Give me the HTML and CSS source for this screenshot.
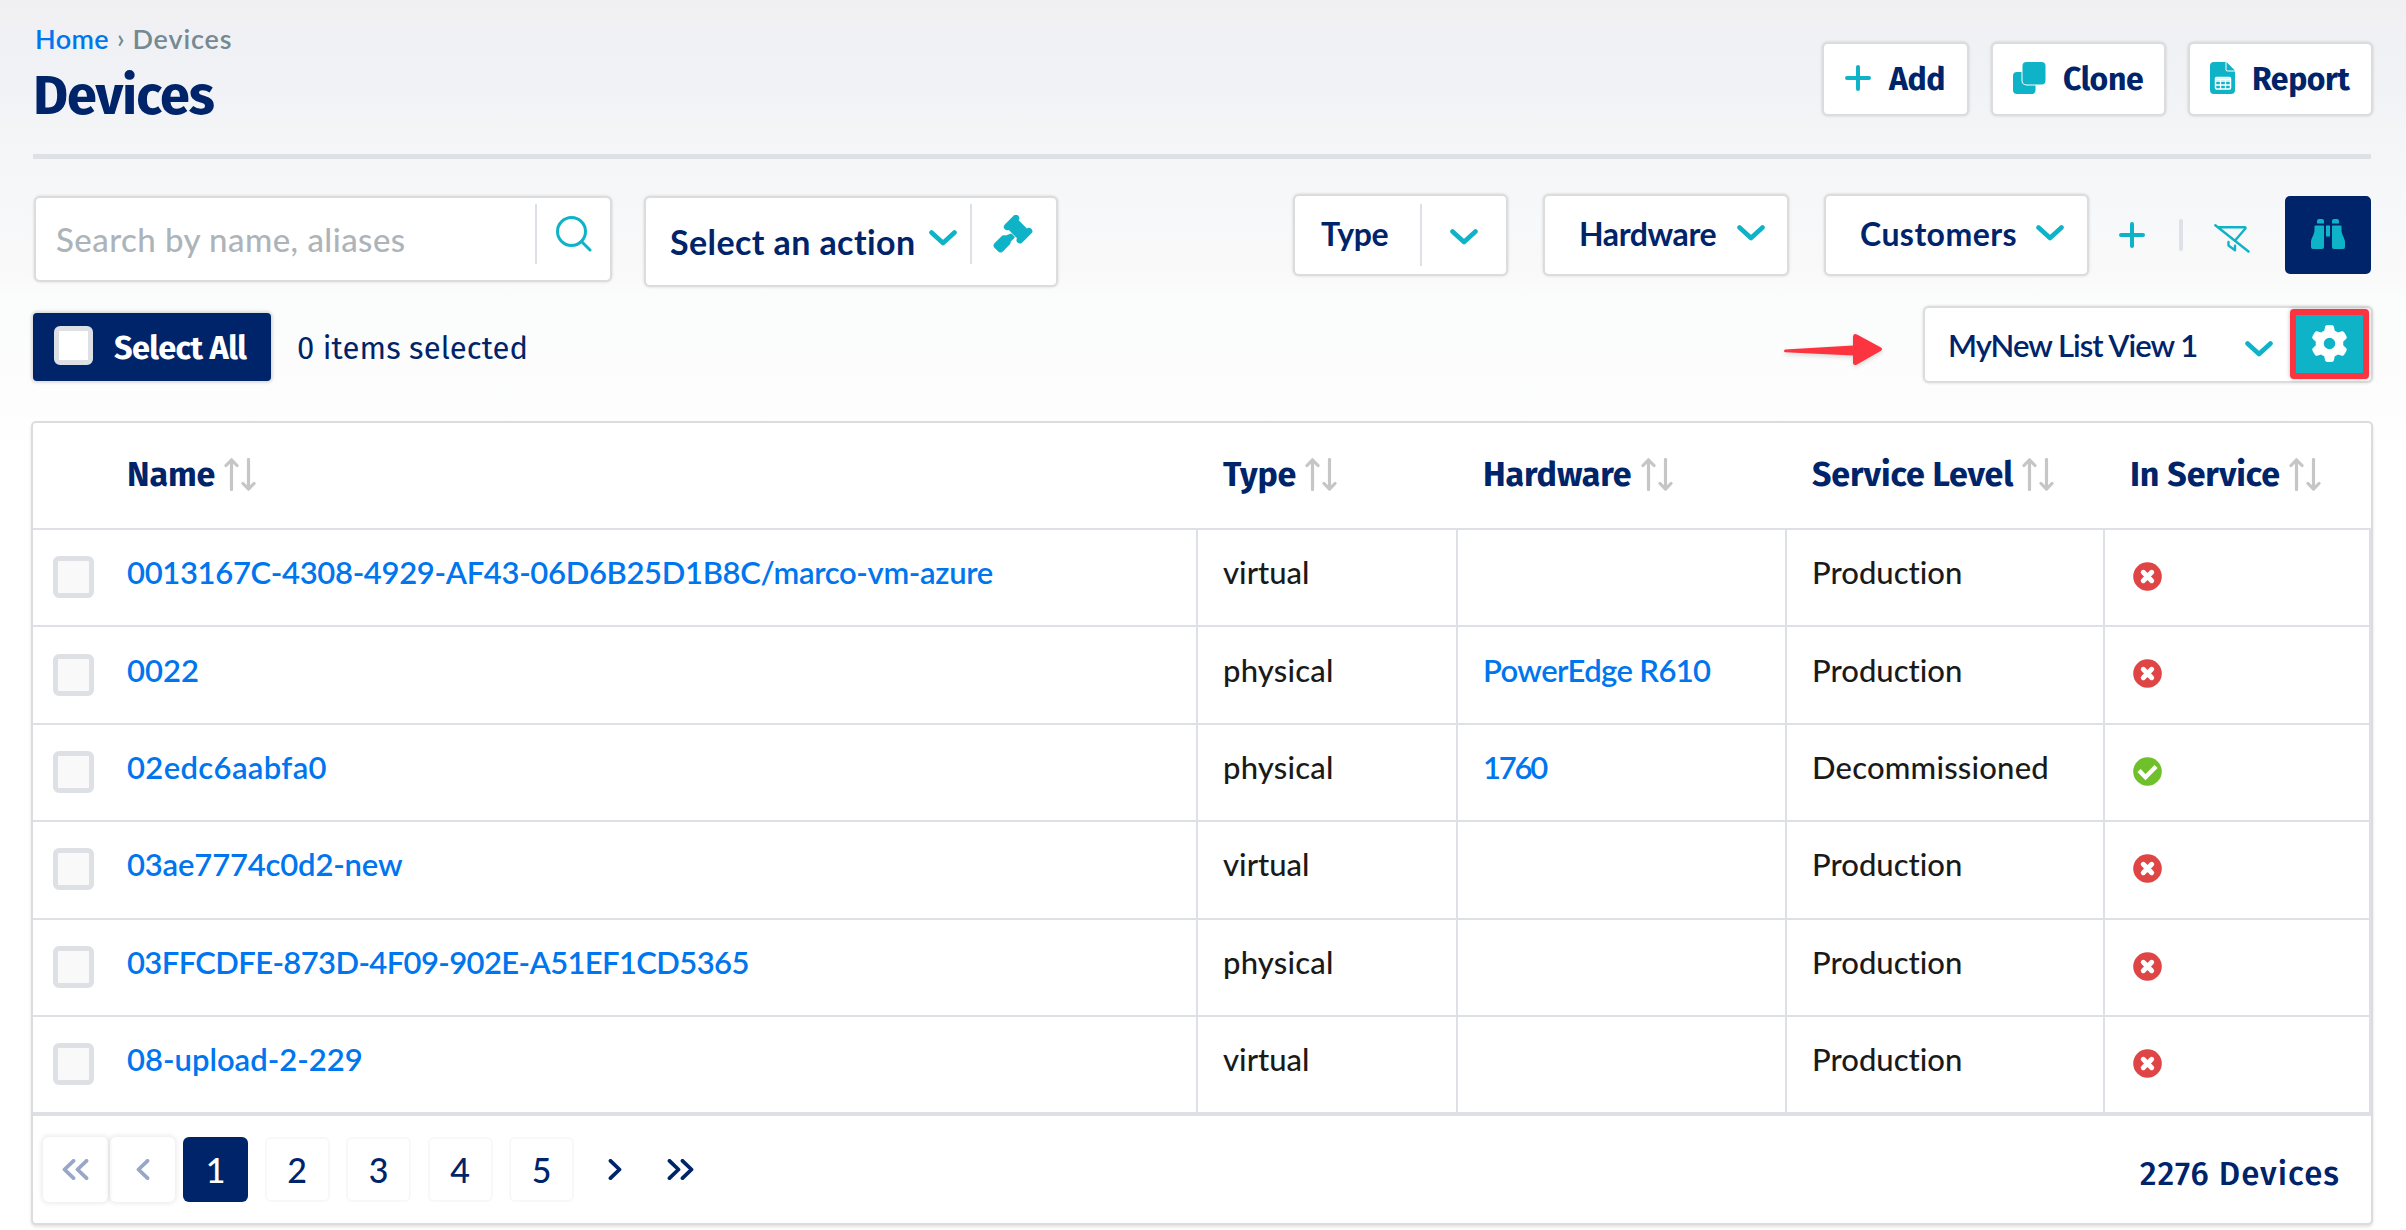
FILE: index.html
```html
<!DOCTYPE html>
<html lang="en">
<head>
<meta charset="utf-8">
<title>Devices</title>
<link rel="stylesheet" href="styles.css">
</head>
<body>
<svg width="0" height="0" class="defs" aria-hidden="true">
  <symbol id="chevron" viewBox="0 0 28 16"><path d="M2.5 2.5 14 13 25.500 2.500" fill="none" stroke="currentColor" stroke-width="4.600" stroke-linecap="round" stroke-linejoin="round"/></symbol>
  <symbol id="plus" viewBox="0 0 26 26"><path d="M13 2v22M2 13h22" fill="none" stroke="currentColor" stroke-width="4" stroke-linecap="round"/></symbol>
  <symbol id="sort" viewBox="0 0 32 33"><path d="M7.500 31.500V2M2 7.500 7.500 1.800 13 7.500M24.500 1.500V31M19 25.500l5.500 5.700 5.500-5.700" fill="none" stroke="currentColor" stroke-width="3.200" stroke-linecap="round" stroke-linejoin="round"/></symbol>
  <symbol id="no" viewBox="0 0 29 29"><circle cx="14.500" cy="14.500" r="14.300" fill="#df4545"/><path d="M10.300 10.300l8.400 8.400M18.700 10.300l-8.400 8.400" stroke="#fff" stroke-width="5" stroke-linecap="round"/></symbol>
  <symbol id="yes" viewBox="0 0 29 29"><circle cx="14.500" cy="14.500" r="14.300" fill="#70c02c"/><path d="M7.500 15l5 5.200L21.500 11" fill="none" stroke="#fff" stroke-width="4.400" stroke-linecap="square"/></symbol>
</svg>
<div class="page">
  <header class="header">
    <div class="heading">
      <nav class="crumbs"><a class="home" href="#">Home</a><span class="sep">›</span><span>Devices</span></nav>
      <h1>Devices</h1>
    </div>
    <div class="actions">
      <button class="box btn add"><svg width="26" height="26"><use href="#plus"/></svg><span>Add</span></button>
      <button class="box btn clone"><svg width="33" height="32" viewBox="0 0 33 32"><path fill="currentColor" d="M13.500 0h15A4 4 0 0 1 32.500 4v14.500a4 4 0 0 1-4 4h-15a4 4 0 0 1-4-4V4a4 4 0 0 1 4-4zM4 10h4.500v8.500a5 5 0 0 0 5 5h9V28a4 4 0 0 1-4 4H4a4 4 0 0 1-4-4V14a4 4 0 0 1 4-4z"/></svg><span>Clone</span></button>
      <button class="box btn report"><svg width="25" height="32" viewBox="0 0 25 32"><path fill="currentColor" d="M4 0h11.500v7a2.500 2.500 0 0 0 2.500 2.500h7V28a4 4 0 0 1-4 4H4a4 4 0 0 1-4-4V4a4 4 0 0 1 4-4zM16.500 0 25 8.500h-7.500a1 1 0 0 1-1-1z"/><rect x="5.500" y="15.500" width="15" height="11.500" rx="1.200" fill="none" stroke="#fff" stroke-width="1.500"/><path d="M5.500 19h15M5.500 23h15M10.500 17.500V27M15.500 17.500V27" stroke="#fff" stroke-width="1.300"/><path d="M5.500 17.200h15" stroke="#fff" stroke-width="2"/></svg><span>Report</span></button>
    </div>
  </header>

  <section class="toolbar">
    <div class="box search"><span class="placeholder">Search by name, aliases</span><i class="rule"></i>
      <svg class="glass" width="36" height="36" viewBox="0 0 36 36"><g fill="none" stroke="currentColor" stroke-width="3" stroke-linecap="round"><circle cx="15.500" cy="15.500" r="14"/><path d="M25.500 25.500 34 34"/></g></svg></div>
    <div class="box action"><span class="label">Select an action</span><svg class="chev" width="28" height="16"><use href="#chevron"/></svg><i class="rule"></i>
      <svg class="gavel" width="40" height="40" viewBox="0 0 40 40"><g fill="currentColor"><path d="M20.500.8a3.400 3.400 0 0 1 4.800 0c1.300 1.300 1.300 3 .4 4.400l8.200 8.200c1.400-.9 3.200-.8 4.400.4a3.400 3.400 0 0 1 0 4.800l-9.500 9.300a3.400 3.400 0 0 1-4.800-4.600L15.800 15c-1.400.5-2.900.3-4-.7a3.400 3.400 0 0 1 0-4.700z"/><path d="M17.300 18.800a1.300 1.300 0 0 1 1.600.1l2.400 2.400a1.300 1.300 0 0 1 0 1.800l-3.600 3.600c.1 1.300-.3 2.100-1.200 3l-6.400 6.500a3.600 3.600 0 0 1-5.100 0l-3.300-3.300a3.400 3.400 0 0 1 0-4.900l6.600-6.600c1-1 2.400-1.200 4.400-1z"/></g></svg></div>
    <div class="filters">
      <div class="box type"><span class="label">Type</span><i class="rule"></i><svg class="chev" width="28" height="16"><use href="#chevron"/></svg></div>
      <div class="box hardware"><span class="label">Hardware</span><svg class="chev" width="28" height="16"><use href="#chevron"/></svg></div>
      <div class="box customers"><span class="label">Customers</span><svg class="chev" width="28" height="16"><use href="#chevron"/></svg></div>
      <svg class="more" width="26" height="26"><use href="#plus"/></svg>
      <i class="bar"></i>
      <svg class="clear" width="36" height="29" viewBox="0 0 36 29"><g fill="none" stroke="currentColor" stroke-width="2.400" stroke-linecap="round" stroke-linejoin="round"><path d="M1.300 1.300 34.500 27.500M5 3.200H30.500c1.200 0 1.200.8.700 1.500L21.500 16"/><path d="M14.500 18v3.500l6.500 4.800v-4.500"/></g></svg>
      <button class="find"><svg width="34" height="30" viewBox="0 0 34 30"><path fill="currentColor" d="M8 0h3a2 2 0 0 1 2 2v2.500H6V2a2 2 0 0 1 2-2zM23 0h3a2 2 0 0 1 2 2v2.500h-7V2a2 2 0 0 1 2-2zM4.500 6.500H12a1 1 0 0 1 1 1V28a2 2 0 0 1-2 2H2a2 2 0 0 1-2-2v-5c0-4 3.500-7 3.500-12V7.500a1 1 0 0 1 1-1zM22 6.500h7.500a1 1 0 0 1 1 1V11c0 5 3.500 8 3.500 12v5a2 2 0 0 1-2 2h-9a2 2 0 0 1-2-2V7.500a1 1 0 0 1 1-1zM15 6.500h4v11h-4z"/></svg></button>
    </div>
  </section>

  <section class="selection">
    <div class="select-all"><i class="check"></i><span>Select All</span></div>
    <span class="count">0 items selected</span>
    <svg class="arrow" width="100" height="40" viewBox="0 0 100 40"><path fill="#fb3440" d="M2 17.500 70 13.500V4.500q.5-3.500 4-2L98 15.500q2 1.700 0 3.200L74 32.500q-3.500 1.500-4-1.500v-7.500L2 20.200q-2-1.300 0-2.700z"/></svg>
    <div class="box view"><span>MyNew List View 1</span><svg class="chev" width="28" height="16"><use href="#chevron"/></svg>
      <div class="gear"><svg width="35" height="37" viewBox="12 0 488 512" preserveAspectRatio="none"><path fill="#fff" d="M495.900 166.600c3.200 8.700 .5 18.400-6.400 24.600l-43.300 39.400c1.100 8.300 1.700 16.800 1.700 25.400s-.6 17.100-1.700 25.400l43.300 39.400c6.900 6.200 9.600 15.900 6.400 24.600c-4.400 11.900-9.700 23.300-15.800 34.300l-4.700 8.100c-6.600 11-14 21.400-22.100 31.200c-5.900 7.200-15.700 9.600-24.500 6.800l-55.700-17.700c-13.400 10.300-28.200 18.900-44 25.400l-12.500 57.100c-2 9.100-9 16.300-18.200 17.800c-13.800 2.300-28 3.500-42.500 3.500s-28.700-1.200-42.500-3.500c-9.200-1.500-16.200-8.700-18.200-17.800l-12.500-57.100c-15.800-6.500-30.600-15.100-44-25.400L83.100 425.900c-8.800 2.800-18.600 .3-24.500-6.800c-8.100-9.800-15.500-20.200-22.100-31.200l-4.700-8.100c-6.100-11-11.400-22.400-15.800-34.300c-3.200-8.700-.5-18.400 6.400-24.600l43.300-39.400C64.600 273.100 64 264.600 64 256s.6-17.100 1.700-25.400L22.400 191.200c-6.900-6.200-9.600-15.900-6.400-24.600c4.400-11.900 9.700-23.300 15.800-34.300l4.700-8.100c6.600-11 14-21.400 22.100-31.200c5.900-7.200 15.700-9.600 24.500-6.800l55.700 17.700c13.400-10.300 28.200-18.900 44-25.400l12.500-57.100c2-9.100 9-16.300 18.200-17.800C227.300 1.200 241.500 0 256 0s28.700 1.200 42.500 3.500c9.200 1.500 16.200 8.700 18.200 17.800l12.500 57.100c15.800 6.500 30.600 15.100 44 25.400l55.700-17.700c8.800-2.800 18.600-.3 24.500 6.800c8.100 9.800 15.500 20.200 22.100 31.200l4.700 8.100c6.100 11 11.400 22.400 15.800 34.300zM256 336a80 80 0 1 0 0-160 80 80 0 1 0 0 160z"/></svg></div>
    </div>
  </section>

  <section class="table">
    <div class="row head">
      <div class="c-name"><span>Name</span><svg width="32" height="33"><use href="#sort"/></svg></div>
      <div><span>Type</span><svg width="32" height="33"><use href="#sort"/></svg></div>
      <div><span>Hardware</span><svg width="32" height="33"><use href="#sort"/></svg></div>
      <div><span>Service Level</span><svg width="32" height="33"><use href="#sort"/></svg></div>
      <div><span>In Service</span><svg width="32" height="33"><use href="#sort"/></svg></div>
    </div>
    <div class="row"><div class="c-name"><i class="check"></i><a class="n1" href="#">0013167C-4308-4929-AF43-06D6B25D1B8C/marco-vm-azure</a></div><div>virtual</div><div></div><div>Production</div><div><svg width="29" height="29"><use href="#no"/></svg></div></div>
    <div class="row"><div class="c-name"><i class="check"></i><a href="#">0022</a></div><div class="phys">physical</div><div><a class="edge" href="#">PowerEdge R610</a></div><div>Production</div><div><svg width="29" height="29"><use href="#no"/></svg></div></div>
    <div class="row"><div class="c-name"><i class="check"></i><a class="n3" href="#">02edc6aabfa0</a></div><div class="phys">physical</div><div><a class="m1760" href="#">1760</a></div><div class="decom">Decommissioned</div><div><svg width="29" height="29"><use href="#yes"/></svg></div></div>
    <div class="row"><div class="c-name"><i class="check"></i><a class="n4" href="#">03ae7774c0d2-new</a></div><div>virtual</div><div></div><div>Production</div><div><svg width="29" height="29"><use href="#no"/></svg></div></div>
    <div class="row"><div class="c-name"><i class="check"></i><a class="n5" href="#">03FFCDFE-873D-4F09-902E-A51EF1CD5365</a></div><div class="phys">physical</div><div></div><div>Production</div><div><svg width="29" height="29"><use href="#no"/></svg></div></div>
    <div class="row last"><div class="c-name"><i class="check"></i><a href="#">08-upload-2-229</a></div><div>virtual</div><div></div><div>Production</div><div><svg width="29" height="29"><use href="#no"/></svg></div></div>
    <footer class="footer">
      <nav class="pager">
        <span class="pg off"><svg width="27" height="21" viewBox="0 0 27 21"><path d="M11.500 1.800 2.500 10.500l9 8.700M24.500 1.800l-9 8.700 9 8.700"/></svg></span>
        <span class="pg off"><svg width="14" height="21" viewBox="0 0 14 21"><path d="M11.500 1.800 2.500 10.500l9 8.700"/></svg></span>
        <span class="pg on">1</span><span class="pg">2</span><span class="pg">3</span><span class="pg">4</span><span class="pg">5</span>
        <svg class="next" width="14" height="21" viewBox="0 0 14 21"><path d="M2.500 1.800l9 8.700-9 8.700"/></svg>
        <svg class="end" width="27" height="21" viewBox="0 0 27 21"><path d="M2.500 1.800l9 8.700-9 8.700M15.500 1.800l9 8.700-9 8.700"/></svg>
      </nav>
      <span class="total">2276 Devices</span>
    </footer>
  </section>
</div>
</body>
</html>
```
FILE: styles.css
```css
* { box-sizing: border-box; }
body {
  margin: 0;
  height: 1230px;
  overflow: hidden;
  font: 500 31px/40px Lato, "Noto Sans", sans-serif;
  font-variant-ligatures: none;
  color: #1a1a1a;
  background: #fff linear-gradient(#f0f0f3 0, #f1f2f6 80px, #f4f5f7 140px, #f7f8fa 220px, #f9f9f9 270px, #fbfcfc 300px, #fdfdfd 410px, #fff 445px) no-repeat;
}
.defs { position: absolute; }
.page { padding: 0 35px 0 33px; }
a { color: #0076ee; font-weight: 600; text-decoration: none; }
svg, i { flex: none; display: block; }
.box {
  display: flex;
  align-items: flex-start;
  background: #fff;
  border: 0;
  border-radius: 4px;
  box-shadow: 0 0 0 2px #dcdcdc, 0 0 3px 2px rgba(0, 0, 0, .15);
  color: #0fb3c8;
  white-space: nowrap;
}
.rule { width: 2px; height: 60px; margin-top: 6px; background: #dde1e6; }

.header { display: flex; justify-content: space-between; height: 159px; border-bottom: 5px solid #dde1e5; }
.crumbs { display: flex; padding: 20px 0 0 2px; height: 66px; font-size: 27px; font-weight: 600; line-height: 37px; letter-spacing: .85px; color: #758993; }
.home { letter-spacing: .4px; }
.sep { margin: 0 7px 0 8px; font-size: 26px; }
h1 { margin: 0; font: 700 54px/60px "Fira Sans", "Noto Sans", sans-serif; letter-spacing: -1.05px; color: #002469; }
.actions { display: flex; gap: 26px; padding-top: 44px; }
.btn { height: 70px; padding: 0; font: 700 32px/40px "Fira Sans", "Noto Sans", sans-serif; }
.btn span { margin-top: 15px; letter-spacing: -.4px; color: #002469; }
.add { width: 143px; padding-left: 21px; }
.add svg { margin: 21px 18px 0 0; }
.clone { width: 171px; padding-left: 20px; }
.clone svg { margin: 18px 17px 0 0; }
.report { width: 181px; padding-left: 20px; }
.report svg { margin: 18px 17px 0 0; }

.toolbar { display: flex; align-items: flex-start; height: 149px; padding: 37px 0 0 3px; }
.search { width: 574px; height: 82px; margin-top: 2px; padding-left: 20px; }
.placeholder { width: 479px; margin-top: 21px; font-size: 33px; letter-spacing: .45px; color: #adb4b9; }
.glass { margin: 18px 0 0 19px; }
.action { width: 410px; height: 87px; margin: 2px 0 0 36px; padding-left: 24px; }
.label { color: #002469; font-weight: 700; }
.action .label { width: 259px; margin-top: 24px; font-size: 34px; letter-spacing: .41px; }
.action .chev { margin: 32px 13px 0 0; }
.gavel { margin: 17px 0 0 21px; }
.filters { display: flex; align-items: flex-start; margin-left: auto; }
.filters .box { height: 78px; }
.filters .label { margin-top: 18px; font-size: 32px; }
.type { width: 211px; padding-left: 26px; }
.type .label { width: 99px; letter-spacing: -.32px; }
.type .rule { margin-top: 8px; height: 62px; }
.type .chev { margin: 33px 0 0 28px; }
.hardware { width: 242px; margin-left: 39px; padding-left: 34px; }
.hardware .label { width: 158px; letter-spacing: -.4px; }
.customers { width: 261px; margin-left: 39px; padding-left: 34px; }
.customers .label { width: 176px; letter-spacing: .44px; }
.hardware .chev, .customers .chev { margin-top: 29px; }
.more { margin: 26px 0 0 32px; color: #0fb3c8; }
.bar { width: 4px; height: 32px; margin: 23px 0 0 34px; border-radius: 2px; background: #dfe1e8; }
.clear { margin: 28px 0 0 31px; color: #0fb3c8; }
.find { display: flex; align-items: flex-start; width: 86px; height: 78px; margin-left: 35px; padding: 23px 0 0 26px; border: 0; border-radius: 5px; background: #002469; color: #0fb3c8; }

.selection { display: flex; align-items: flex-start; height: 115px; }
.check { width: 41px; height: 42px; border: 5px solid #dde1e6; border-radius: 6px; background: #f9f9f9; }
.select-all { display: flex; width: 238px; height: 68px; margin-top: 5px; padding: 13px 0 0 21px; border-radius: 4px; background: #002469; box-shadow: 0 0 3px 2px rgba(0, 0, 0, .13); color: #fff; font: 700 32.500px/40px "Fira Sans", "Noto Sans", sans-serif; letter-spacing: -.6px; white-space: nowrap; }
.select-all .check { width: 39px; height: 39px; background: #fff; }
.select-all span { margin: 3px 0 0 21px; }
.count { margin: 21px 0 0 26px; font: 400 31px/40px "Fira Sans", "Noto Sans", sans-serif; letter-spacing: .12px; color: #002469; }
.arrow { margin: 24px 42px 0 auto; filter: drop-shadow(0 2px 2px rgba(0, 0, 0, .15)); }
.view { width: 446px; height: 73px; }
.view span { width: 297px; margin: 17px 0 0 23px; letter-spacing: -.98px; font-weight: 600; color: #002469; }
.view .chev { margin-top: 33px; }
.gear { width: 79px; height: 70px; margin: 1px 0 0 17px; padding: 10px 0 0 16px; border: 6px solid #fb3440; border-radius: 4px; background: #0fb3c8; box-shadow: 0 0 4px rgba(0, 0, 0, .25); }

.table { height: 800px; background: #fff; border-radius: 3px; box-shadow: 0 0 0 2px #dcdcdc, 0 2px 3px 2px rgba(0, 0, 0, .12); }
.row { display: grid; grid-template-columns: 1165px 260px 329px 318px 266px; height: 97.4px; border-bottom: 2px solid #dde1e6; }
.row > div { padding: 22.200px 0 0 25px; border-right: 2px solid #dde1e6; white-space: nowrap; }
.row > div:nth-child(5) { padding: 32px 0 0 28px; }
.row > .c-name { display: flex; padding-left: 20px; }
.c-name .check { margin: 4px 33px 0 0; }
.last { height: 99px; border-bottom-width: 4px; }
.head { height: 107px; font: 700 34px/40px "Fira Sans", "Noto Sans", sans-serif; letter-spacing: -.1px; color: #002469; }
.head > div, .head > div:nth-child(5) { display: flex; padding: 32px 0 0 25px; border: 0; }
.head > .c-name { padding-left: 94px; }
.head svg { margin: 3px 0 0 9px; color: #c6c6c6; }
.n1 { letter-spacing: -.33px; }
.n3 { letter-spacing: .36px; }
.n4 { letter-spacing: -.17px; }
.n5 { letter-spacing: -.62px; }
.phys, .decom { letter-spacing: .2px; }
.edge { letter-spacing: -.62px; }
.m1760 { letter-spacing: -2.2px; }

.footer { display: flex; justify-content: space-between; align-items: flex-start; padding: 21px 31px 0 10px; color: #002469; }
.pager { display: flex; align-items: flex-start; font-size: 34px; line-height: 65px; }
.pager path { fill: none; stroke: currentColor; stroke-width: 3.8; stroke-linecap: round; stroke-linejoin: round; }
.pg { display: flex; justify-content: center; width: 65px; height: 65px; margin-right: 16.500px; border-radius: 6px; box-shadow: inset 0 0 0 2px #f8f8f8; }
.off { margin-right: 2px; padding-top: 22px; box-shadow: 0 0 4px 2px rgba(0, 0, 0, .07); color: #99a7c6; }
.off + .on { margin-left: 6px; }
.on { background: #002469; color: #fff; box-shadow: none; }
.next { margin: 22px 0 0 17px; }
.end { margin: 22px 0 0 45px; }
.total { margin-top: 17px; font: 500 33px/40px "Fira Sans", "Noto Sans", sans-serif; letter-spacing: 1px; }
```
